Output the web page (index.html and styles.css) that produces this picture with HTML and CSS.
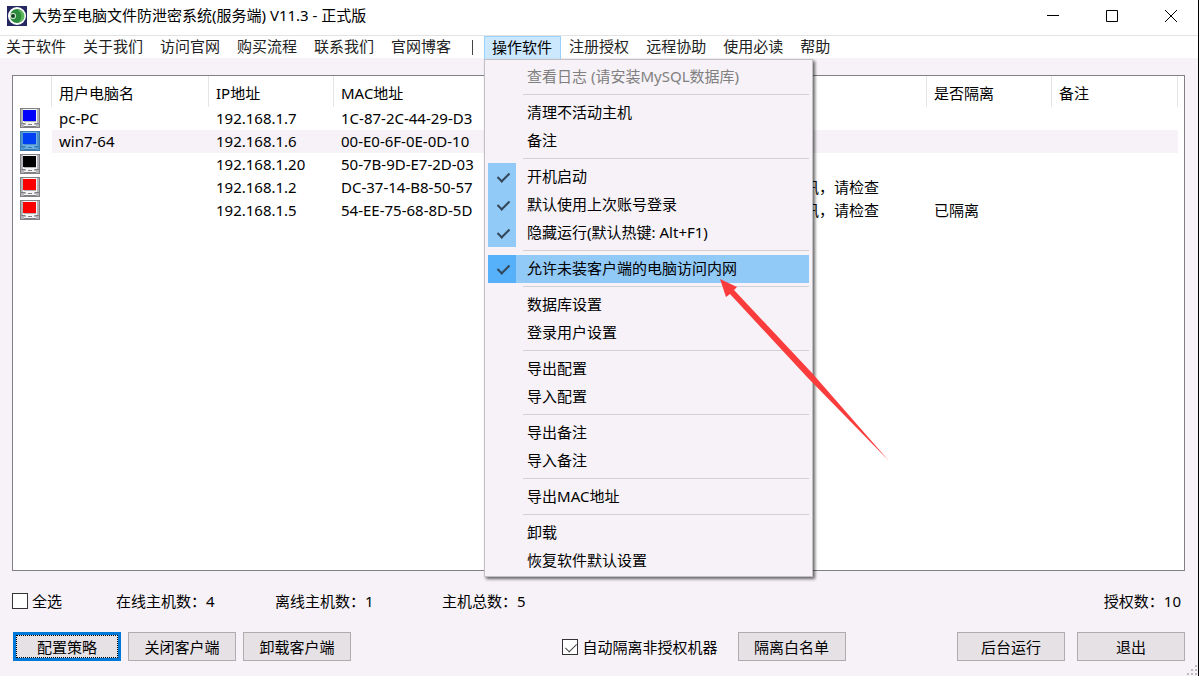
FILE: index.html
```
<!DOCTYPE html>
<html lang="zh-CN">

<head>
    <meta charset="UTF-8">
    <meta name="viewport" content="width=device-width, initial-scale=1.0">
    <title>大势至电脑文件防泄密系统(服务端) V11.3 - 正式版</title>
    <link rel="stylesheet" href="styles.css">
</head>

<body>

    <!-- monitor icon shared by the host rows, the screen takes the row's color -->
    <svg class="defs" width="0" height="0">
        <symbol id="monitor" viewBox="0 0 20 20">
            <rect width="20" height="20" fill="var(--frame)" />
            <rect x="1" y="1" width="18" height="18" fill="var(--case)" />
            <rect x="3" y="1" width="14" height="14" fill="var(--light)" />
            <rect x="4" y="3" width="12" height="11" fill="var(--case)" />
            <rect x="3" y="2" width="13" height="11" fill="var(--screen)" />
            <path d="M1 15h4v1H1zM15 15h4v1h-4z" fill="var(--frame)" />
            <path d="M6 15h8v2H6zM4 17h12v1H4z" fill="var(--light)" />
            <path d="M8 16h4v1H8zM4 18h12v1H4z" fill="var(--frame)" />
        </symbol>
    </svg>

    <div class="window">
        <header class="title-bar">
            <svg class="app-icon" width="20" height="20" viewBox="0 0 20 20">
                <rect width="20" height="20" fill="#23285f" />
                <circle cx="10" cy="10" r="9" fill="#fff" />
                <circle cx="10" cy="10" r="7" fill="#2c8a3c" />
                <path d="M11 4a6 6 0 0 1 1 12a8 8 0 0 0-1-12z" fill="#5db85b" />
                <circle cx="6" cy="10" r="3" fill="#d8f0d8" />
                <circle cx="6" cy="10" r="2" fill="#123f1e" />
            </svg>
            <h1>大势至电脑文件防泄密系统(服务端) V11.3 - 正式版</h1>
            <div class="window-controls">
                <button aria-label="最小化">
                    <svg width="12" height="12" viewBox="0 0 12 12"><path d="M0 5.5h12" /></svg>
                </button>
                <button aria-label="最大化">
                    <svg width="12" height="12" viewBox="0 0 12 12"><path d="M.5.5h11v11H.5z" /></svg>
                </button>
                <button aria-label="关闭">
                    <svg width="12" height="12" viewBox="0 0 12 12"><path d="M0 0l12 12M12 0L0 12" /></svg>
                </button>
            </div>
        </header>

        <nav class="menu-bar">
            <button>关于软件</button>
            <button>关于我们</button>
            <button>访问官网</button>
            <button>购买流程</button>
            <button>联系我们</button>
            <button>官网博客</button>
            <span class="divider"></span>
            <div class="menu-open">
                <button class="active">操作软件</button>
                <div class="dropdown">
                    <button disabled>查看日志 (请安装MySQL数据库)</button>
                    <hr>
                    <button>清理不活动主机</button>
                    <button>备注</button>
                    <hr>
                    <button class="checked">开机启动</button>
                    <button class="checked">默认使用上次账号登录</button>
                    <button class="checked">隐藏运行(默认热键: Alt+F1)</button>
                    <hr>
                    <button class="checked current">允许未装客户端的电脑访问内网</button>
                    <hr>
                    <button>数据库设置</button>
                    <button>登录用户设置</button>
                    <hr>
                    <button>导出配置</button>
                    <button>导入配置</button>
                    <hr>
                    <button>导出备注</button>
                    <button>导入备注</button>
                    <hr>
                    <button>导出MAC地址</button>
                    <hr>
                    <button>卸载</button>
                    <button>恢复软件默认设置</button>
                    <svg class="arrow" width="170" height="182" viewBox="0 0 170 182">
                        <path d="M0 0L17 8L14 11L92 94L169 182L87 98L10 15L6 18z" />
                    </svg>
                </div>
            </div>
            <button>注册授权</button>
            <button>远程协助</button>
            <button>使用必读</button>
            <button>帮助</button>
        </nav>

        <main>
            <div class="host-list">
                <table>
                    <colgroup>
                        <col class="col-icon">
                        <col class="col-name">
                        <col class="col-ip">
                        <col>
                        <col class="col-state">
                        <col class="col-isolated">
                        <col class="col-remark">
                    </colgroup>
                    <thead>
                        <tr>
                            <th></th>
                            <th>用户电脑名</th>
                            <th>IP地址</th>
                            <th>MAC地址</th>
                            <th></th>
                            <th>是否隔离</th>
                            <th>备注</th>
                        </tr>
                    </thead>
                    <tbody>
                        <tr class="blue">
                            <td><svg width="20" height="20"><use href="#monitor" /></svg></td>
                            <td>pc-PC</td>
                            <td>192.168.1.7</td>
                            <td>1C-87-2C-44-29-D3</td>
                            <td></td>
                            <td></td>
                            <td></td>
                        </tr>
                        <tr class="selected">
                            <td><svg width="20" height="20"><use href="#monitor" /></svg></td>
                            <td>win7-64</td>
                            <td>192.168.1.6</td>
                            <td>00-E0-6F-0E-0D-10</td>
                            <td></td>
                            <td></td>
                            <td></td>
                        </tr>
                        <tr class="black">
                            <td><svg width="20" height="20"><use href="#monitor" /></svg></td>
                            <td></td>
                            <td>192.168.1.20</td>
                            <td>50-7B-9D-E7-2D-03</td>
                            <td></td>
                            <td></td>
                            <td></td>
                        </tr>
                        <tr class="red">
                            <td><svg width="20" height="20"><use href="#monitor" /></svg></td>
                            <td></td>
                            <td>192.168.1.2</td>
                            <td>DC-37-14-B8-50-57</td>
                            <td>讯，请检查</td>
                            <td></td>
                            <td></td>
                        </tr>
                        <tr class="red">
                            <td><svg width="20" height="20"><use href="#monitor" /></svg></td>
                            <td></td>
                            <td>192.168.1.5</td>
                            <td>54-EE-75-68-8D-5D</td>
                            <td>讯，请检查</td>
                            <td>已隔离</td>
                            <td></td>
                        </tr>
                    </tbody>
                </table>
            </div>

            <div class="status-row">
                <label class="check select-all"><input type="checkbox">全选</label>
                <span class="count">在线主机数：4</span>
                <span class="count">离线主机数：1</span>
                <span class="count">主机总数：5</span>
                <span class="licenses">授权数：10</span>
            </div>

            <div class="button-row">
                <div class="group left">
                    <button class="btn focused">配置策略</button>
                    <button class="btn">关闭客户端</button>
                    <button class="btn">卸载客户端</button>
                </div>
                <div class="group middle">
                    <label class="check"><input type="checkbox" checked>自动隔离非授权机器</label>
                    <button class="btn">隔离白名单</button>
                </div>
                <div class="group right">
                    <button class="btn">后台运行</button>
                    <button class="btn">退出</button>
                </div>
            </div>
        </main>

        <svg class="grip" width="12" height="12" viewBox="0 0 12 12">
            <path d="M9 1h2v2H9zM5 5h2v2H5zM9 5h2v2H9zM1 9h2v2H1zM5 9h2v2H5zM9 9h2v2H9z" />
        </svg>
    </div>

</body>

</html>
```
FILE: styles.css
```
* {
    box-sizing: border-box;
    margin: 0;
    padding: 0;
}

body {
    font-family: "Noto Sans", "Noto Sans CJK SC", sans-serif;
    font-size: 15px;
    line-height: 20px;
    color: #000;
    background-color: #f6f2f7;
}

button {
    font: inherit;
    color: inherit;
    border: none;
    background: none;
    white-space: nowrap;
}

.defs {
    position: absolute;
}

.window {
    position: relative;
    min-height: 100vh;
    display: flex;
    flex-direction: column;
    border-right: 1px solid #000;
}

/* Title bar */
.title-bar {
    display: flex;
    align-items: center;
    height: 35px;
    padding: 0 15px 4px 7px;
    background-color: #fff;
}

.title-bar h1 {
    flex: 1;
    margin-left: 5px;
    padding-bottom: 1px;
    font-size: 15px;
    font-weight: normal;
}

.window-controls {
    display: flex;
    gap: 35px;
}

.window-controls button {
    width: 24px;
    height: 24px;
}

.window-controls svg {
    display: block;
    margin: 6px;
    fill: none;
    stroke: #000;
}

/* Menu bar */
.menu-bar {
    display: flex;
    height: 23px;
    border-top: 1px solid #e3e3e3;
    background-color: #fff;
}

.menu-bar > button,
.menu-open > button {
    height: 22px;
    padding: 0 9px 2px 8px;
    color: #222;
}

.menu-bar > button:first-child {
    padding-left: 6px;
}

.divider {
    width: 1px;
    height: 15px;
    margin: 4px 11px 0 12px;
    background-color: #444;
}

.menu-open {
    position: relative;
}

.menu-open > .active {
    height: 24px;
    border: 1px solid #99d1ff;
    padding: 0 8px 4px 7px;
    color: #000;
    background-color: #cce8ff;
}

/* Drop-down menu */
.dropdown {
    position: absolute;
    top: 23px;
    left: 0;
    z-index: 1;
    width: 329px;
    padding: 3px 3px 1px;
    border: 1px solid #c3c0c4;
    background-color: #f6f2f7;
    box-shadow: 2px 2px 3px rgba(0, 0, 0, 0.6);
}

.dropdown button {
    position: relative;
    display: block;
    width: 100%;
    height: 28px;
    padding: 0 0 3px 39px;
    text-align: left;
}

.dropdown button:disabled {
    color: #808080;
}

.dropdown hr {
    height: 1px;
    margin: 3px 0 4px 35px;
    border: none;
    background-color: #d3d0d4;
}

.dropdown .checked::before {
    content: "";
    position: absolute;
    top: 0;
    left: 0;
    width: 28px;
    height: 28px;
    background-color: #91c9f7;
}

.dropdown .checked::after {
    content: "";
    position: absolute;
    top: 7px;
    left: 12px;
    width: 5px;
    height: 10px;
    border: solid #33475a;
    border-width: 0 2px 2px 0;
    transform: rotate(45deg);
}

.dropdown .current {
    background-color: #91c9f7;
}

.dropdown .current::before {
    background-color: #56b0fa;
}

.arrow {
    position: absolute;
    top: 219px;
    left: 235px;
    fill: #fa3c3c;
}

/* Host list */
main {
    flex: 1;
    display: flex;
    flex-direction: column;
    padding: 17px 13px 15px 12px;
}

.host-list {
    flex: 1;
    padding-right: 6px;
    border: 1px solid #828087;
    background-color: #fff;
}

table {
    width: 100%;
    table-layout: fixed;
    border-collapse: separate;
    border-spacing: 0;
}

.col-icon {
    width: 39px;
}

.col-name {
    width: 157px;
}

.col-ip,
.col-isolated {
    width: 125px;
}

.col-state {
    width: 130px;
}

.col-remark {
    width: 126px;
}

th {
    height: 31px;
    padding: 3px 0 0 7px;
    border-right: 1px solid #e5e5e5;
    font-weight: normal;
    text-align: left;
}

td {
    height: 23px;
    padding: 0 0 1px 7px;
    white-space: nowrap;
}

td svg {
    display: block;
}

tr {
    --frame: #808085;
    --case: #b4b4b8;
    --light: #f4f4f4;
}

.blue {
    --screen: #0000fb;
}

.black {
    --screen: #000;
}

.red {
    --screen: #fb0000;
}

.selected {
    --frame: #3b7cae;
    --case: #4f93cc;
    --light: #6fb0e4;
    --screen: #0040f4;
}

.selected td + td {
    background-color: #f6f2f7;
}

/* Bottom area */
.status-row {
    display: flex;
    align-items: center;
    height: 61px;
    padding-bottom: 2px;
}

.check {
    display: flex;
    align-items: center;
    gap: 4px;
}

.check input {
    appearance: none;
    width: 16px;
    height: 16px;
    border: 1px solid #333;
    background-color: #fff;
}

.check input:checked::before {
    content: "";
    display: block;
    width: 5px;
    height: 10px;
    margin: 1px 0 0 5px;
    border: solid #444;
    border-width: 0 1px 1px 0;
    transform: rotate(45deg);
}

.select-all {
    width: 104px;
}

.count {
    width: 159px;
}

.count + .count + .count {
    margin-left: 8px;
}

.licenses {
    margin-left: auto;
    padding-right: 4px;
}

.button-row {
    display: flex;
    justify-content: space-between;
}

.group {
    display: flex;
    align-items: center;
}

.left {
    gap: 7px;
    padding-left: 1px;
}

.middle {
    gap: 20px;
    margin-left: 100px;
}

.right {
    gap: 12px;
}

.btn {
    width: 108px;
    height: 29px;
    border: 1px solid #adadad;
    background-color: #e5e1e5;
}

.focused {
    border: 3px solid #0078d7;
    outline: 1px dotted #000;
    outline-offset: -4px;
}

.grip {
    position: absolute;
    right: 0;
    bottom: 0;
    fill: #bfbcc0;
}
```
